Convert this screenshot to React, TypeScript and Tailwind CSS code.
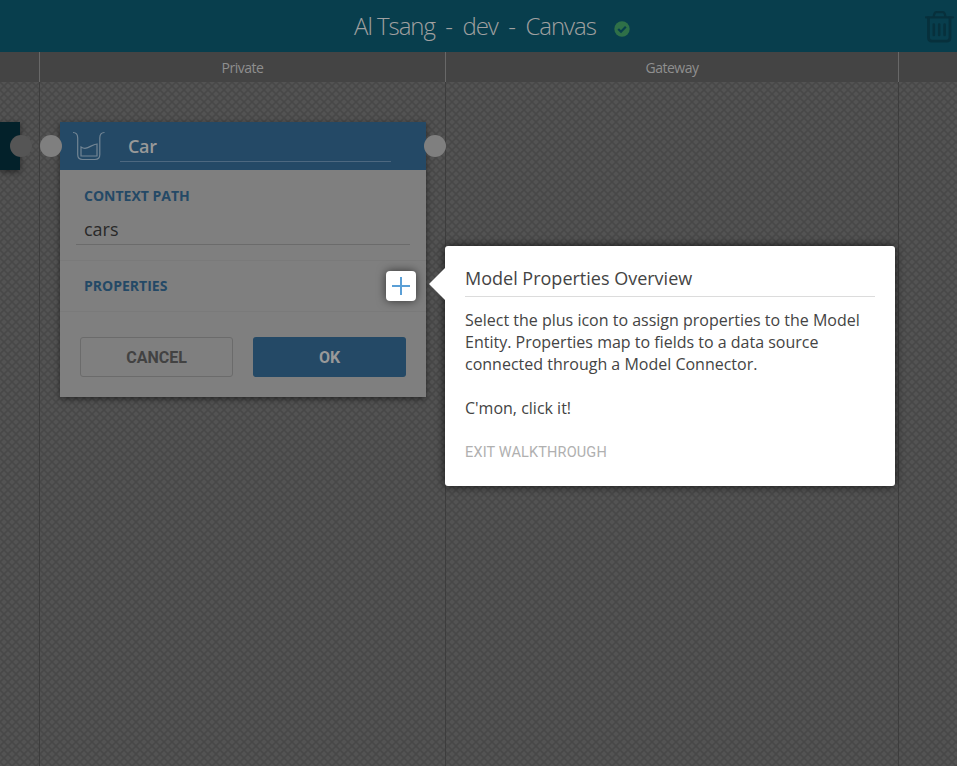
const sans = "font-['Open_Sans','Noto_Sans',sans-serif]";

function Lattice() {
  return (
    <svg className="absolute inset-0 h-full w-full" aria-hidden="true">
      <defs>
        <pattern id="lattice" width="8" height="8" patternUnits="userSpaceOnUse">
          <rect width="8" height="8" fill="#535353" />
          <path d="M-1-1 9 9M9-1-1 9" stroke="#484848" strokeWidth="1.600" />
        </pattern>
      </defs>
      <rect width="100%" height="100%" fill="url(#lattice)" />
    </svg>
  );
}

function TopBar() {
  return (
    <header className="flex h-[52px] items-center bg-[#083e4d] pl-[354px] pr-[2px]">
      <h1 className="w-[243px] shrink-0 whitespace-pre text-[24px] font-light leading-[52px] tracking-[-1.030px] text-[#a0a0a0]">
        Al Tsang  -  dev  -  Canvas
      </h1>
      <svg className="ml-[17px] mt-[5px] size-4 shrink-0" viewBox="0 0 16 16" fill="none">
        <circle cx="8" cy="8" r="7.700" fill="#2f7048" />
        <path d="m4.200 8 2.800 2.800 4.800-5" stroke="#083e4d" strokeWidth="2.200" />
      </svg>
      <svg className="ml-auto mt-[2px] h-[34px] w-[30px] shrink-0" viewBox="0 0 30 34" fill="none" stroke="#07303c" strokeLinecap="round">
        <path d="M1 7.300h27M8.500 7l1-3.500q.5-1.300 1.800-1.300h6.500q1.300 0 1.800 1.300l1 3.500" strokeWidth="2.300" />
        <path d="M3.500 8v19.500q0 3.700 3.500 3.700h14.500q3.500 0 3.500-3.700V8" strokeWidth="2.800" />
        <path d="M8.800 14.500v10.500M14.200 14.500v10.500M19.600 14.500v10.500" strokeWidth="2.600" />
      </svg>
    </header>
  );
}

function Columns() {
  return (
    <div className="flex h-[30px] bg-[#444] text-center text-sm leading-[32px] tracking-[-0.500px] text-[#8f8f8f]">
      <div className="w-10 border-r border-[#686868]" />
      <div className="w-[406px] border-r border-[#686868]">Private</div>
      <div className="w-[453px] border-r border-[#686868]">Gateway</div>
      <div className="flex-1" />
    </div>
  );
}

function ModelCard() {
  return (
    <section className="absolute left-[60px] top-[40px] flex h-[275px] w-[366px] flex-col bg-[#7f7f7f] shadow-[0_2px_6px_rgba(0,0,0,0.5)]">
      <div className="flex h-12 shrink-0 bg-[#244966]">
        <svg className="ml-[12px] mt-[8px] h-[34px] w-[34px]" viewBox="0 0 34 34" fill="none" stroke="#728594" strokeWidth="1.200">
          <path d="M1 2.500q4.700 0 4.700 5.500V24.500q0 5 4.800 5h12.500q4.800 0 4.800-5V8q0-5.500 4.700-5.500" />
          <path d="M9 17c6 4 9.500-2.500 16-3V26H9Z" />
        </svg>
        <div className="ml-[14px] h-10 w-[271px] border-b border-[#4d6880] pl-2 text-[18px] font-semibold leading-[48px] tracking-[-0.300px] text-[#999]">Car</div>
      </div>
      <div className="h-[91px] shrink-0 border-b border-[#7a7a7a] px-4 pt-4">
        <div className="pl-2 text-sm font-bold leading-5 text-[#244966]">CONTEXT PATH</div>
        <div className="h-[39px] w-[334px] border-b border-[#6b6b6b] pl-2 text-[18px] leading-[47px] text-[#292929]">cars</div>
      </div>
      <div className="flex h-[51px] shrink-0 items-center justify-between border-b border-[#7a7a7a] pl-6 pr-[10px] text-sm font-bold text-[#244966]">
        PROPERTIES
        <button className="flex size-[30px] items-center justify-center rounded bg-white shadow-[0_0_10px_rgba(0,0,0,0.6)]">
          <svg className="size-[18px]" viewBox="0 0 18 18" stroke="#5a9fd6" strokeWidth="2">
            <path d="M9 0v18M0 9h18" />
          </svg>
        </button>
      </div>
      <div className="flex gap-5 px-5 pt-[25px] font-[Roboto,sans-serif] text-base font-bold">
        <button className="h-10 w-[153px] rounded-[3px] border border-[#6b6b6b] pt-[2px] text-[#424242]">CANCEL</button>
        <button className="h-10 w-[153px] rounded-[3px] bg-[#244966] pt-[2px] text-[#999]">OK</button>
      </div>
    </section>
  );
}

function Walkthrough() {
  return (
    <aside className="absolute left-[445px] top-[164px] h-[240px] w-[450px] rounded-[3px] bg-white px-5 pt-[18px] text-[#444] shadow-[0_0_10px_rgba(0,0,0,0.75)]">
      <svg className="absolute left-[-16px] top-[22px] h-8 w-4" viewBox="0 0 16 32" fill="#fff">
        <path d="M16 0 0 16l16 16Z" />
      </svg>
      <h2 className="h-[33px] border-b border-[#dcdcdc] text-[18px] leading-[29px]">Model Properties Overview</h2>
      <p className="mt-3 whitespace-nowrap text-base leading-[22px]">
        Select the plus icon to assign properties to the Model
        <br />
        Entity. Properties map to fields to a data source
        <br />
        connected through a Model Connector.
      </p>
      <p className="mt-[22px] text-base leading-[22px]">C'mon, click it!</p>
      <button className="mt-[23px] block font-[Roboto,sans-serif] text-[14.500px] leading-[22px] tracking-[0.150px] text-[#b0b0b0]">EXIT WALKTHROUGH</button>
    </aside>
  );
}

export default function App() {
  return (
    <main className={`flex h-[766px] w-[957px] flex-col overflow-hidden ${sans}`}>
      <TopBar />
      <Columns />
      <div className="relative flex-1">
        <Lattice />
        <div className="relative flex h-full">
          <div className="w-10 border-r border-[#3d3d3d]" />
          <div className="w-[406px] border-r border-[#3d3d3d]" />
          <div className="w-[453px] border-r border-[#3d3d3d]" />
        </div>
        <div className="absolute left-0 top-[40px] h-12 w-5 bg-[#03212a] shadow-[0_2px_6px_rgba(0,0,0,0.5)]" />
        <div className="absolute left-[10px] top-[53px] size-[22px] rounded-full bg-[#555]" />
        <ModelCard />
        <div className="absolute left-[40px] top-[53px] size-[22px] rounded-full bg-[#7f7f7f]" />
        <div className="absolute left-[424px] top-[53px] size-[22px] rounded-full bg-[#7f7f7f]" />
        <Walkthrough />
      </div>
    </main>
  );
}
